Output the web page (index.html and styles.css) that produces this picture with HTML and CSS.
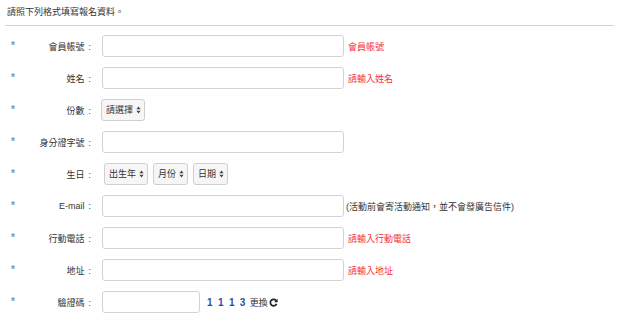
FILE: index.html
```html
<!DOCTYPE html>
<html lang="zh-Hant">
<head>
    <meta charset="UTF-8">
    <title>報名資料</title>
    <link rel="stylesheet" href="styles.css">
</head>
<body>
    <div class="page">
        <p class="intro">請照下列格式填寫報名資料。</p>
        <form class="signup">
            <div class="row">
                <span class="star">*</span>
                <label class="label" for="member">會員帳號<span class="colon">:</span></label>
                <input class="field" type="text" id="member">
                <span class="hint">會員帳號</span>
            </div>
            <div class="row">
                <span class="star">*</span>
                <label class="label" for="name">姓名<span class="colon">:</span></label>
                <input class="field" type="text" id="name">
                <span class="hint">請輸入姓名</span>
            </div>
            <div class="row">
                <span class="star">*</span>
                <label class="label" for="qty">份數<span class="colon">:</span></label>
                <div class="pick first">
                    <select id="qty"><option>請選擇</option></select>
                    <svg class="arrows" width="5" height="8" viewBox="0 0 5 8"><path d="M2.5 0.5L4.6 3.2H0.4Z M2.5 7.5L4.6 4.8H0.4Z" fill="#444"/></svg>
                </div>
            </div>
            <div class="row">
                <span class="star">*</span>
                <label class="label" for="idno">身分證字號<span class="colon">:</span></label>
                <input class="field" type="text" id="idno">
            </div>
            <div class="row">
                <span class="star">*</span>
                <label class="label" for="year">生日<span class="colon">:</span></label>
                <div class="pick year">
                    <select id="year"><option>出生年</option></select>
                    <svg class="arrows" width="5" height="8" viewBox="0 0 5 8"><path d="M2.5 0.5L4.6 3.2H0.4Z M2.5 7.5L4.6 4.8H0.4Z" fill="#444"/></svg>
                </div>
                <div class="pick">
                    <select><option>月份</option></select>
                    <svg class="arrows" width="5" height="8" viewBox="0 0 5 8"><path d="M2.5 0.5L4.6 3.2H0.4Z M2.5 7.5L4.6 4.8H0.4Z" fill="#444"/></svg>
                </div>
                <div class="pick">
                    <select><option>日期</option></select>
                    <svg class="arrows" width="5" height="8" viewBox="0 0 5 8"><path d="M2.5 0.5L4.6 3.2H0.4Z M2.5 7.5L4.6 4.8H0.4Z" fill="#444"/></svg>
                </div>
            </div>
            <div class="row">
                <span class="star">*</span>
                <label class="label" for="email">E-mail<span class="colon">:</span></label>
                <input class="field" type="text" id="email">
                <span class="note">(活動前會寄活動通知，並不會發廣告信件)</span>
            </div>
            <div class="row">
                <span class="star">*</span>
                <label class="label" for="mobile">行動電話<span class="colon">:</span></label>
                <input class="field" type="text" id="mobile">
                <span class="hint">請輸入行動電話</span>
            </div>
            <div class="row">
                <span class="star">*</span>
                <label class="label" for="addr">地址<span class="colon">:</span></label>
                <input class="field" type="text" id="addr">
                <span class="hint">請輸入地址</span>
            </div>
            <div class="row">
                <span class="star">*</span>
                <label class="label" for="code">驗證碼<span class="colon">:</span></label>
                <input class="field short" type="text" id="code">
                <span class="captcha">1 1 1 3</span>
                <a class="refresh">更換<svg width="9" height="9" viewBox="0 0 10 10"><path d="M8.2 3.2A3.6 3.6 0 1 0 8.4 6.6" fill="none" stroke="#222" stroke-width="1.9"/><path d="M9.6 0.8V4.6H5.8Z" fill="#222"/></svg></a>
            </div>
        </form>
    </div>
</body>
</html>
```

FILE: styles.css
```css
body {
    margin: 0;
    background-color: #fff;
    font-family: "Liberation Sans", "Noto Sans CJK TC", sans-serif;
    font-size: 9px;
    color: #333;
}

.page {
    padding: 6px 7px 0 5px;
}

.intro {
    margin: 0;
    padding: 0 0 6px 2px;
    line-height: 13px;
    border-bottom: 1px solid #cbd6dd;
}

.signup {
    padding-top: 9px;
}

.row {
    display: flex;
    align-items: center;
    height: 22px;
    margin-bottom: 10px;
}

.star {
    width: 8px;
    padding-left: 6px;
    align-self: flex-start;
    margin-top: 5px;
    color: #6fa0ae;
    font-size: 10px;
    font-weight: bold;
}

.label {
    width: 72px;
    text-align: right;
    margin-right: 11px;
}

.colon {
    margin-left: 4px;
}

.field {
    box-sizing: border-box;
    width: 242px;
    height: 22px;
    margin: 0;
    border: 1px solid #d4d4d4;
    border-radius: 3px;
    background-color: #fff;
}

.field.short {
    width: 98px;
}

.hint {
    margin-left: 4px;
    color: #f52f3a;
}

.note {
    margin-left: 2px;
}

.pick {
    box-sizing: border-box;
    display: inline-flex;
    align-items: center;
    height: 22px;
    margin-left: 5px;
    padding: 0 3px 0 4px;
    border: 1px solid #cfcfcf;
    border-radius: 3px;
    background-color: #f6f6f6;
}

.pick.first {
    margin-left: -1px;
}

.pick.year {
    margin-left: 2px;
}

.pick select {
    appearance: none;
    -webkit-appearance: none;
    border: 0;
    padding: 0;
    margin: 0 2px 0 0;
    background: transparent;
    font: inherit;
    color: #333;
}

.arrows {
    display: block;
}

.captcha {
    margin-left: 7px;
    color: #1f4fa6;
    font-size: 10px;
    font-weight: bold;
    letter-spacing: 1.3px;
}

.refresh {
    display: inline-flex;
    align-items: center;
    margin-left: 3px;
    color: #333;
}

.refresh svg {
    margin-left: 1px;
}
```
